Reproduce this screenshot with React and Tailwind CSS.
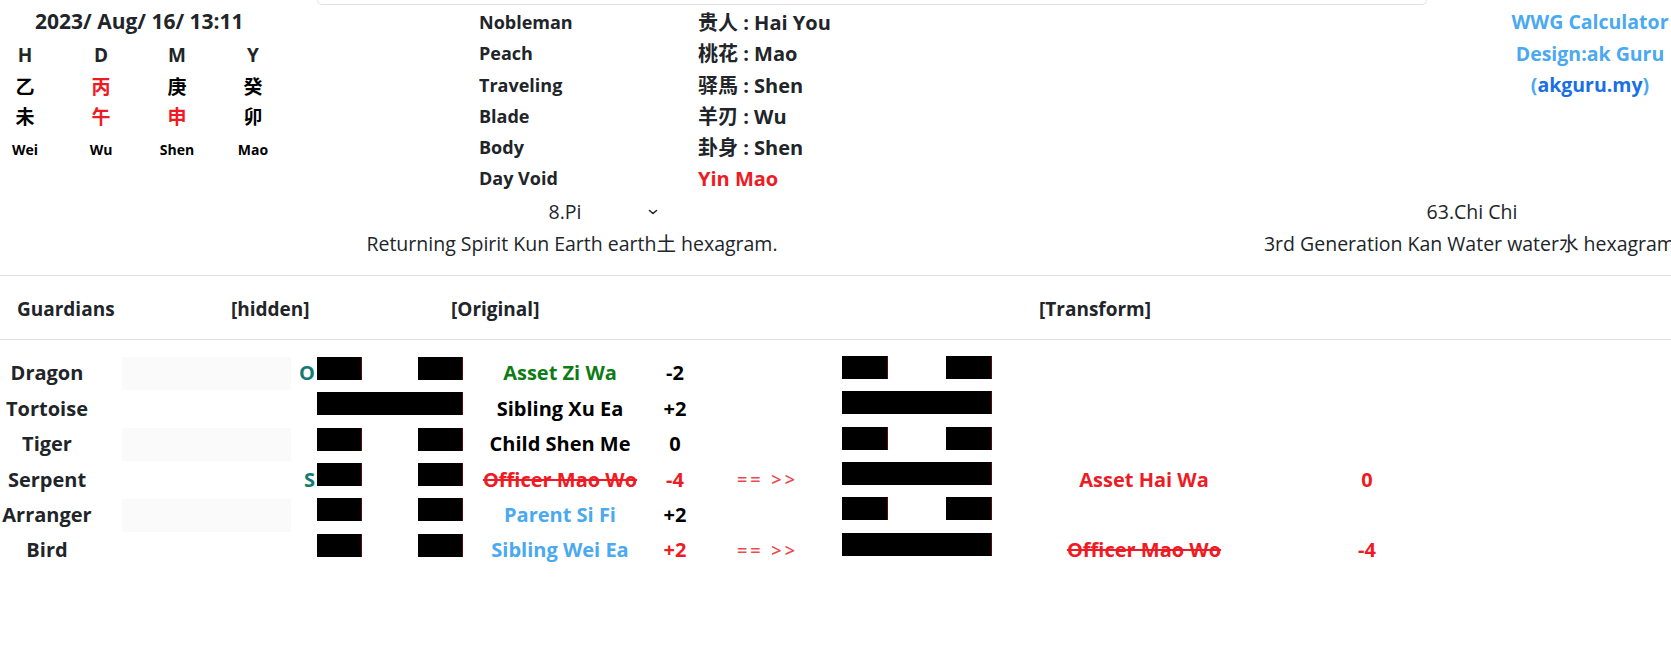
import React from 'react'

const font = { fontFamily: '"Open Sans", "Noto Sans CJK SC", sans-serif' }

const pillars = [
  { head: 'H', stem: '乙', branch: '未', pin: 'Wei', stemRed: false, branchRed: false },
  { head: 'D', stem: '丙', branch: '午', pin: 'Wu', stemRed: true, branchRed: true },
  { head: 'M', stem: '庚', branch: '申', pin: 'Shen', stemRed: false, branchRed: true },
  { head: 'Y', stem: '癸', branch: '卯', pin: 'Mao', stemRed: false, branchRed: false },
]

const stars = [
  ['Nobleman', '贵人 : Hai You'],
  ['Peach', '桃花 : Mao'],
  ['Traveling', '驿馬 : Shen'],
  ['Blade', '羊刃 : Wu'],
  ['Body', '卦身 : Shen'],
]

// orig/trans: true = yang (solid), false = yin (broken)
const rows = [
  { name: 'Dragon', mark: 'O', orig: false, rel: 'Asset Zi Wa', relCls: 'text-[#0f7b16]', num: '-2', numCls: 'text-black', moving: false, trans: false },
  { name: 'Tortoise', mark: '', orig: true, rel: 'Sibling Xu Ea', relCls: 'text-black', num: '+2', numCls: 'text-black', moving: false, trans: true },
  { name: 'Tiger', mark: '', orig: false, rel: 'Child Shen Me', relCls: 'text-black', num: '0', numCls: 'text-black', moving: false, trans: false },
  { name: 'Serpent', mark: 'S', orig: false, rel: 'Officer Mao Wo', relCls: 'text-[#ee1b24] line-through', num: '-4', numCls: 'text-[#ee1b24]', moving: true, trans: true, tRel: 'Asset Hai Wa', tStrike: false, tNum: '0' },
  { name: 'Arranger', mark: '', orig: false, rel: 'Parent Si Fi', relCls: 'text-[#4aa9f0]', num: '+2', numCls: 'text-black', moving: false, trans: false },
  { name: 'Bird', mark: '', orig: false, rel: 'Sibling Wei Ea', relCls: 'text-[#4aa9f0]', num: '+2', numCls: 'text-[#ee1b24]', moving: true, trans: true, tRel: 'Officer Mao Wo', tStrike: true, tNum: '-4' },
]

function Line({ yang, wide }) {
  const seg = wide ? 'w-[46px]' : 'w-[45px]'
  if (yang) {
    return <div className={`h-[23px] border-r border-[#5a0b0b] bg-black ${wide ? 'w-[150px]' : 'w-[146px]'}`} />
  }
  return (
    <div className={`flex ${wide ? 'gap-[58px]' : 'gap-[56px]'}`}>
      <div className={`h-[23px] border-r border-[#5a0b0b] bg-black ${seg}`} />
      <div className={`h-[23px] border-r border-[#5a0b0b] bg-black ${seg}`} />
    </div>
  )
}

export default function App() {
  return (
    <div className="w-full overflow-hidden bg-white text-[#212529]" style={font}>
      <div className="w-[1920px]">
        {/* tail of the box above */}
        <div className="ml-[317px] h-[5px] w-[1110px] rounded-b-md border border-t-0 border-[#dee2e6]" />

        {/* Header */}
        <div className="flex items-start">
          <div className="w-[479px] font-bold">
            <div className="h-[32px] pl-[35px] text-[21px] leading-[32px]">2023/ Aug/ 16/ 13:11</div>
            <div className="mt-[2px] flex gap-[26px]">
              {pillars.map((p) => (
                <div key={p.head} className="flex w-[50px] flex-col items-center">
                  <div className="h-[32px] text-[19px] leading-[32px]">{p.head}</div>
                  <div className={`h-[32px] text-[19px] leading-[32px] ${p.stemRed ? 'text-[#ee1b24]' : 'text-black'}`}>{p.stem}</div>
                  <div className={`h-[28px] text-[19px] leading-[28px] ${p.branchRed ? 'text-[#ee1b24]' : 'text-black'}`}>{p.branch}</div>
                  <div className="h-[38px] text-[14px] leading-[38px] text-black">{p.pin}</div>
                </div>
              ))}
            </div>
          </div>

          <div className="w-[1011px] pt-[2px] font-bold leading-[31.3px]">
            {stars.map(([k, v]) => (
              <div key={k} className="flex">
                <div className="w-[219px] text-[18px]">{k}</div>
                <div className="text-[20px]">{v}</div>
              </div>
            ))}
            <div className="flex">
              <div className="w-[219px] text-[18px]">Day Void</div>
              <div className="text-[20px] text-[#ee1b24]">Yin Mao</div>
            </div>
          </div>

          <div className="w-[200px] pt-[1px] text-center text-[19.5px] font-bold leading-[31.5px] text-[#4aa9f0]">
            <div className="whitespace-nowrap">WWG Calculator</div>
            <div className="whitespace-nowrap">Design:ak Guru</div>
            <div>(<span className="text-[#1a6fe3]">akguru.my</span>)</div>
          </div>
        </div>

        {/* Hexagram names */}
        <div className="mt-[4px] border-b border-[#dee2e6] pb-[16px]">
          <div className="ml-[122px] grid grid-cols-[900px_900px] text-[19.5px] leading-[30px]">
            <div className="flex flex-col items-center">
              <div className="flex h-[30px] w-[180px] items-start leading-[26px]">
                <span className="flex-1 text-center">8.Pi</span>
                <svg width="10" height="8" viewBox="0 0 10 8" className="mr-[4px] mt-[9px]">
                  <path d="M1.5 2.5 L5 5.5 L8.5 2.5" fill="none" stroke="#212529" strokeWidth="1.6" strokeLinecap="round" strokeLinejoin="round" />
                </svg>
              </div>
              <div className="whitespace-nowrap">Returning Spirit Kun Earth earth土 hexagram.</div>
            </div>
            <div className="flex flex-col items-center">
              <div className="h-[30px] leading-[26px]">63.Chi Chi</div>
              <div className="whitespace-nowrap">3rd Generation Kan Water water水 hexagram.</div>
            </div>
          </div>
        </div>

        {/* Table header */}
        <div className="grid h-[64px] grid-cols-[231px_220px_588px_200px] items-center border-b border-[#dee2e6] pt-[3px] text-[19px] font-bold">
          <div className="pl-[17px]">Guardians</div>
          <div>[hidden]</div>
          <div>[Original]</div>
          <div>[Transform]</div>
        </div>

        {/* Table body */}
        <div className="pt-[16px] text-[20px] font-bold">
          {rows.map((r, i) => (
            <div key={r.name} className="grid h-[35.4px] grid-cols-[94px_28px_169px_26px_146px_194px_36px_149px_150px_304px_142px] items-center">
              <div className="text-center">{r.name}</div>
              <div />
              <div className={`h-[33px] ${i % 2 === 0 ? 'bg-[#fafafa]' : ''}`} />
              <div className="pr-[2px] text-right text-[#127c74]">{r.mark}</div>
              <div className="mt-[1px] self-start">
                <Line yang={r.orig} />
              </div>
              <div className={`whitespace-nowrap text-center ${r.relCls}`}>{r.rel}</div>
              <div className={`text-center ${r.numCls}`}>{r.num}</div>
              <div className="whitespace-pre text-center text-[18px] font-semibold tracking-[3px] text-[#e84a4f]">{r.moving ? '== >>' : ''}</div>
              <div className="self-start">
                <Line yang={r.trans} wide />
              </div>
              <div className={`whitespace-nowrap text-center text-[#ee1b24] ${r.tStrike ? 'line-through' : ''}`}>{r.tRel || ''}</div>
              <div className="text-center text-[#ee1b24]">{r.tNum || ''}</div>
            </div>
          ))}
        </div>
      </div>
    </div>
  )
}
